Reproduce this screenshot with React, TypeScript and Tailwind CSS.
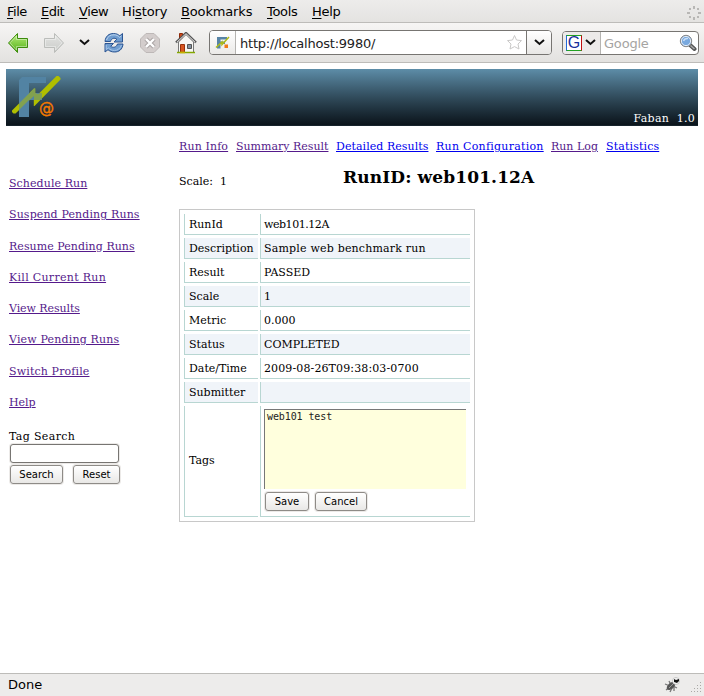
import React from "react";

const serif = "font-['DejaVu_Serif',serif] text-[11px] leading-[14px] whitespace-pre";
const sans = "font-['DejaVu_Sans',sans-serif] whitespace-pre";

function Chevron() {
  return (
    <svg width="11" height="7" viewBox="0 0 11 7">
      <path d="M1 1l4.500 4L10 1" fill="none" stroke="#111" strokeWidth="2" />
    </svg>
  );
}

function MenuItem({ pre = "", hot, rest, className }: { pre?: string; hot: string; rest: string; className: string }) {
  return (
    <span className={`flex-none ${className}`}>
      {pre}
      <span className="underline underline-offset-2">{hot}</span>
      {rest}
    </span>
  );
}

function Arrow({ id, from, to, stroke, flip }: { id: string; from: string; to: string; stroke: string; flip?: boolean }) {
  return (
    <svg width="22" height="22" viewBox="0 0 22 22" className={`flex-none ${flip ? "-scale-x-100" : ""}`}>
      <defs>
        <linearGradient id={id} x1="0" y1="0" x2="0" y2="1">
          <stop offset="0" stopColor={from} />
          <stop offset="1" stopColor={to} />
        </linearGradient>
      </defs>
      <path d="M1.500 11L10.500 1.500V6.500H20.500V15.500H10.500V20.500Z" fill={`url(#${id})`} stroke={stroke} strokeLinejoin="round" />
      <path d="M3 10.800L9.500 4V7.500H19.500V14.500H9.500V18Z" fill="none" stroke="#fff" strokeOpacity=".4" />
    </svg>
  );
}

function Reload() {
  return (
    <svg width="22" height="22" viewBox="0 0 22 22" className="flex-none">
      <g fill="#6f9dd0" stroke="#2c5592" strokeWidth="1" strokeLinejoin="round">
        <path d="M2 9.500C2.500 4 6 1.500 10.500 1.500c3 0 4.800 1 6.300 2.300L19.500 1.500V10H11l2.800-2.800C11.500 5.500 8.500 6 7.500 9.500Z" />
        <path d="M20 12c-.5 5.500-4 8-8.500 8-3 0-5-1-6.500-2.300L2 20V11.500h8.500l-2.800 2.800c2.300 1.700 5.800 1.200 6.800-2.300Z" />
      </g>
      <path d="M3.500 8C4.500 4.500 7.500 2.800 11 2.800c2.500 0 4 1 5.600 2.500L18.400 4" fill="none" stroke="#bcd4ee" />
      <path d="M18.500 13c-1 3.500-4 5.500-7 5.500-2.500 0-4.500-1-6-2.500L3.200 17.500V13" fill="none" stroke="#a4c3e6" />
    </svg>
  );
}

function Stop() {
  return (
    <svg width="22" height="22" viewBox="0 0 22 22" className="flex-none">
      <path d="M7 1.500h8L20.500 7v8L15 20.500H7L1.500 15V7Z" fill="#d3cdcc" stroke="#bdb8b7" />
      <path d="M7 7l8 8M15 7l-8 8" stroke="#aaa5a4" strokeWidth="4.400" />
      <path d="M7 7l8 8M15 7l-8 8" stroke="#fff" strokeWidth="2.400" />
    </svg>
  );
}

function Home() {
  return (
    <svg width="22" height="22" viewBox="0 0 22 22" className="flex-none">
      <path d="M4.500 1.500h3v7h-3z" fill="#cc4a1b" stroke="#8f2b0b" />
      <path d="M3.500 10L11 2.500l7.500 7.500v10.500h-15z" fill="#f7f7f5" stroke="#777" />
      <path d="M1 10.500L11 1l10 9.500" fill="none" stroke="#555" strokeWidth="2.400" />
      <path d="M1.800 10.400L11 1.700l9.200 8.700" fill="none" stroke="#eee" strokeWidth="1" />
      <path d="M5.500 12.500h4v8h-4z" fill="#d95622" stroke="#98320d" />
      <path d="M12.500 12.500h4v4h-4z" fill="#8493a3" stroke="#555" />
      <path d="M2 20.500h18" stroke="#85a800" strokeWidth="1.500" />
      <path d="M5 20.500h5" stroke="#c9b100" strokeWidth="1.500" />
    </svg>
  );
}

function FabanMark({ small }: { small?: boolean }) {
  return small ? (
    <svg width="15" height="15" viewBox="0 0 15 15">
      <path d="M2 2h10v2.500H5.500v2H10v2.500H5.500v4.500H2z" fill="#5784a6" />
      <path d="M1 12.500L7 7v2.500L14 2" fill="none" stroke="#aebb18" strokeWidth="1.500" />
      <path d="M9.500 9.500h3.500v3.500H9.500z" fill="#f07818" />
    </svg>
  ) : (
    <svg width="52" height="46" viewBox="0 0 52 46" className="flex-none">
      <path d="M1 34.500L23 12.500h1.200v5L27 18.500 45.500 0h2l2 2v1.500L23.500 30h-.7V20L4.500 37.500h-2L1 36z" fill="#b0bf00" />
      <path d="M8 4l3-3h24v6H18v10h13v7H18v17H8z" fill="#5283a3" />
      <path d="M8 27.500L18 17.500V24L8 34z" fill="#82a14f" />
      <path d="M18 17.500l5-5h1.200V17L27 18l2-1h2v5.500l-2 1.500h-6v-4l-5 4.500z" fill="#82a14f" />
      <path d="M35 7V10.500L45 1h-4z" fill="#b0bf00" fillOpacity="0" />
      <text x="28" y="37" fontFamily="DejaVu Sans" fontSize="15" fill="#f57900" stroke="#f57900" strokeWidth=".4">@</text>
    </svg>
  );
}

function Google() {
  return (
    <span className="flex h-4 w-4 flex-none items-center justify-center border border-t-[#22a122] border-r-[#c01010] border-b-[#22a122] border-l-[#2368d8] bg-white font-['Liberation_Sans'] text-[16px] leading-[14px] text-[#172f9c]">
      G
    </span>
  );
}

function Magnifier() {
  return (
    <svg width="18" height="18" viewBox="0 0 18 18" className="flex-none">
      <path d="M10.500 10.500l5 4.500" stroke="#555" strokeWidth="4" strokeLinecap="round" />
      <path d="M11.500 11.500l4 3.500" stroke="#aaa" strokeWidth="1.500" />
      <circle cx="7" cy="7" r="5.700" fill="#79a9df" stroke="#888" />
      <circle cx="7" cy="7" r="4.600" fill="none" stroke="#e7edf4" />
      <path d="M4.500 7q1-3 4.500-2.500" fill="none" stroke="#c9dff7" strokeWidth="1.500" />
    </svg>
  );
}

function Throbber() {
  return (
    <svg width="14" height="14" viewBox="0 0 14 14" className="mt-px mr-[3px] ml-auto flex-none">
      <g fill="#b8b7b5">
        <path d="M6 0h2v3H6zM6 11h2v3H6zM0 6h3v2H0zM11 6h3v2h-3z" />
        <path d="M2 2h2v2H2zM10 2h2v2h-2zM2 10h2v2H2zM10 10h2v2h-2z" />
      </g>
    </svg>
  );
}

function Bug() {
  return (
    <svg width="17" height="16" viewBox="0 0 17 16" className="flex-none">
      <path d="M1 7l5 2M2 13l4-3M5 4l2 4M6 15l2-4M10 14l0-4M13 11l-4-2" stroke="#777" strokeWidth="1.300" />
      <ellipse cx="7" cy="9" rx="5" ry="3" transform="rotate(-40 7 9)" fill="#555" />
      <path d="M5 11l6-6" stroke="#999" />
      <circle cx="12" cy="4" r="3.500" fill="#f8f8f8" stroke="#aaa" strokeWidth=".6" />
      <path d="M10 2l2 1 3-1v2l-2 2-3-1z" fill="#111" />
    </svg>
  );
}

function Grip() {
  return (
    <svg width="12" height="12" viewBox="0 0 12 12" className="flex-none">
      <path d="M9 1h1v1H9zM6 4h1v1H6zM9 4h1v1H9zM3 7h1v1H3zM6 7h1v1H6zM9 7h1v1H9zM0 10h1v1H0zM3 10h1v1H3zM6 10h1v1H6zM9 10h1v1H9z" fill="#aaa9a6" />
    </svg>
  );
}

function Button({ children, className }: { children: React.ReactNode; className: string }) {
  return (
    <button className={`${sans} flex h-[19px] items-center justify-center rounded-[3px] border border-[#8e8b87] bg-linear-to-b from-white to-[#e9e8e6] text-[10px] leading-3 text-black shadow-[0_0_0_1px_#eceae8] ${className}`}>
      {children}
    </button>
  );
}

const tabs = [
  { label: "Run Info", cls: "w-[49px] tracking-[0.13px] text-[#551a8b]" },
  { label: "Summary Result", cls: "w-[92px] text-[#551a8b]" },
  { label: "Detailed Results", cls: "w-[92px] tracking-[0.06px] text-[#0000ee]" },
  { label: "Run Configuration", cls: "w-[107px] tracking-[0.26px] text-[#0000ee]" },
  { label: "Run Log", cls: "w-[47px] text-[#551a8b]" },
  { label: "Statistics", cls: "w-[54px] tracking-[0.14px] text-[#0000ee]" },
];

const links = [
  { label: "Schedule Run", cls: "tracking-[0.08px]" },
  { label: "Suspend Pending Runs", cls: "tracking-[0.12px]" },
  { label: "Resume Pending Runs", cls: "tracking-[0.05px]" },
  { label: "Kill Current Run", cls: "tracking-[0.3px]" },
  { label: "View Results", cls: "tracking-[-0.08px]" },
  { label: "View Pending Runs", cls: "tracking-[0.17px]" },
  { label: "Switch Profile", cls: "tracking-[0.14px]" },
  { label: "Help", cls: "" },
];

const rows = [
  { name: "RunId", value: "web101.12A", cls: "tracking-[-0.45px]" },
  { name: "Description", value: "Sample web benchmark run", cls: "tracking-[0.19px]" },
  { name: "Result", value: "PASSED", cls: "" },
  { name: "Scale", value: "1", cls: "" },
  { name: "Metric", value: "0.000", cls: "" },
  { name: "Status", value: "COMPLETED", cls: "" },
  { name: "Date/Time", value: "2009-08-26T09:38:03-0700", cls: "tracking-[0.12px]" },
  { name: "Submitter", value: "", cls: "" },
];

export default function App() {
  return (
    <div className="flex h-[696px] w-[704px] flex-col overflow-hidden bg-white text-black">
      <nav className={`${sans} flex h-[23px] flex-none items-center border-b border-[#bdbcb9] bg-linear-to-b from-[#edeceb] to-[#e4e3e1] pt-[2px] pl-[7px] text-[13px] leading-4`}>
        <MenuItem hot="F" rest="ile" className="w-[34px] tracking-[-0.5px]" />
        <MenuItem hot="E" rest="dit" className="w-[38px] tracking-[-0.5px]" />
        <MenuItem hot="V" rest="iew" className="w-[43px] tracking-[-0.4px]" />
        <MenuItem pre="Hi" hot="s" rest="tory" className="w-[59px] tracking-[-0.15px]" />
        <MenuItem hot="B" rest="ookmarks" className="w-[86px] tracking-[-0.15px]" />
        <MenuItem hot="T" rest="ools" className="w-[45px] tracking-[-0.3px]" />
        <MenuItem hot="H" rest="elp" className="w-[30px] tracking-[-0.3px]" />
        <Throbber />
      </nav>

      <header className="flex h-10 flex-none items-center border-b border-[#bdbcb9] bg-linear-to-b from-[#f6f5f4] to-[#e3e2e0] pl-[7px]">
        <Arrow id="back" from="#b8f07a" to="#4fae13" stroke="#3c8b0c" />
        <span className="w-[14px]" />
        <Arrow id="forward" from="#e4e5e3" to="#c9cbc8" stroke="#bbbdba" flip />
        <span className="flex w-[38px] items-center pl-[14px]"><Chevron /></span>
        <Reload />
        <span className="w-[14px]" />
        <Stop />
        <span className="w-[14px]" />
        <Home />
        <div className={`${sans} ml-[12px] flex h-[25px] w-[343px] flex-none overflow-hidden rounded-[4px] border border-[#777572] bg-white text-[13px] tracking-[-0.22px] text-[#222]`}>
          <span className="flex w-[26px] items-center justify-center border-r border-[#b5b4b1] bg-linear-to-b from-white to-[#ebeae8]"><FabanMark small /></span>
          <span className="flex items-center pt-[2px] pl-[4px]">http://localhost:9980/</span>
          <svg width="17" height="17" viewBox="0 0 17 17" className="my-auto mr-[3px] ml-auto">
            <path d="M8.500 1.500l2 4.500 5 .6-3.500 3.400 1 5-4.500-2.400L4 15l1-5L1.500 6.600l5-.6z" fill="#fff" stroke="#c9c8c7" strokeLinejoin="round" />
          </svg>
          <span className="flex w-[25px] items-center justify-center border-l border-[#777572] bg-linear-to-b from-white to-[#e8e7e5]"><Chevron /></span>
        </div>
        <div className={`${sans} ml-[10px] flex h-[24px] w-[137px] flex-none items-center overflow-hidden rounded-[4px] border border-[#777572] bg-white text-[13px] text-[#a5a4a2]`}>
          <span className="flex h-full w-[38px] flex-none items-center gap-[3px] border-r border-[#b5b4b1] bg-[#eceae9] pl-[3px]"><Google /><Chevron /></span>
          <span className="pt-[2px] pl-[3px] tracking-[-0.2px]">Google</span>
          <span className="mr-[1px] ml-auto"><Magnifier /></span>
        </div>
      </header>

      <section className="mx-[6px] mt-[6px] flex h-[57px] flex-none justify-between border-b border-[#17242c] bg-linear-to-b from-[#5d8da8] to-[#0b141b]">
        <span className="pt-[7px] pl-[5px]"><FabanMark /></span>
        <span className={`${serif} -mb-px self-end pr-[3px] tracking-[0.28px] text-white`}>Faban  1.0</span>
      </section>

      <main className="flex flex-1 items-start">
        <aside className="w-[179px] flex-none pt-[43px] pl-[9px]">
          <ul className="flex flex-col">
            {links.map((link) => (
              <li key={link.label} className="h-[31.3px]">
                <a className={`${serif} ${link.cls} text-[#551a8b] underline underline-offset-1`}>{link.label}</a>
              </li>
            ))}
          </ul>
          <div className={`${serif} mt-[11px] tracking-[0.35px]`}>Tag Search</div>
          <input className="ml-[1px] block h-[19px] w-[109px] rounded-[3px] border border-[#777572] bg-white shadow-[0_0_0_1px_#eceae8]" />
          <div className="mt-[2px] ml-[1px] flex gap-[10px]">
            <Button className="w-[53px]">Search</Button>
            <Button className="w-[47px]">Reset</Button>
          </div>
        </aside>

        <div className="flex-1 pt-[14px]">
          <div className="flex gap-2">
            {tabs.map((tab) => (
              <a key={tab.label} className={`${serif} flex-none underline underline-offset-1 ${tab.cls}`}>{tab.label}</a>
            ))}
          </div>
          <div className="flex h-[55px] items-start">
            <span className={`${serif} w-[164px] pt-[21px]`}>Scale:  1</span>
            <h1 className="pt-[13px] font-['DejaVu_Serif'] text-[17px] leading-5 font-bold tracking-[0.12px] whitespace-nowrap">RunID: web101.12A</h1>
          </div>

          <div className="flex h-[313px] w-[296px] flex-col gap-[3px] border border-[#c8c8c8] pt-[4px] pl-[4px]">
            {rows.map((row, i) => (
              <div key={row.name} className={`${serif} flex h-[21px] gap-[2px]`}>
                <span className={`flex w-[74px] items-center border-b border-l border-[#b8d6d2] pt-[1px] pl-[4px] ${i % 2 ? "bg-[#f0f4f9]" : ""}`}>{row.name}</span>
                <span className={`flex w-[210px] items-center border-b border-l border-[#b8d6d2] pt-[1px] pl-[3px] ${row.cls} ${i % 2 ? "bg-[#f0f4f9]" : ""}`}>{row.value}</span>
              </div>
            ))}
            <div className={`${serif} flex h-[111px] gap-[2px]`}>
              <span className="flex w-[74px] items-center border-b border-l border-[#b8d6d2] pl-[4px]">Tags</span>
              <div className="w-[210px] border-b border-l border-[#b8d6d2] pt-[3px] pl-[3px]">
                <div className="h-[80px] w-[202px] border-t border-l border-[#777] bg-[#ffffdd] pt-[1px] pl-[2px] font-['DejaVu_Sans_Mono'] text-[10px] leading-3 tracking-[-0.1px] text-[#222]">web101 test</div>
                <div className="mt-[3px] ml-[1px] flex gap-[6px]">
                  <Button className="w-[44px]">Save</Button>
                  <Button className="w-[52px]">Cancel</Button>
                </div>
              </div>
            </div>
          </div>
        </div>
      </main>

      <footer className={`${sans} flex h-[23px] flex-none items-center border-t border-[#bdbcb9] bg-[#edeceb] pl-[8px] text-[13px]`}>
        Done
        <span className="ml-auto flex items-end gap-[10px] pr-[1px]"><Bug /><Grip /></span>
      </footer>
    </div>
  );
}
